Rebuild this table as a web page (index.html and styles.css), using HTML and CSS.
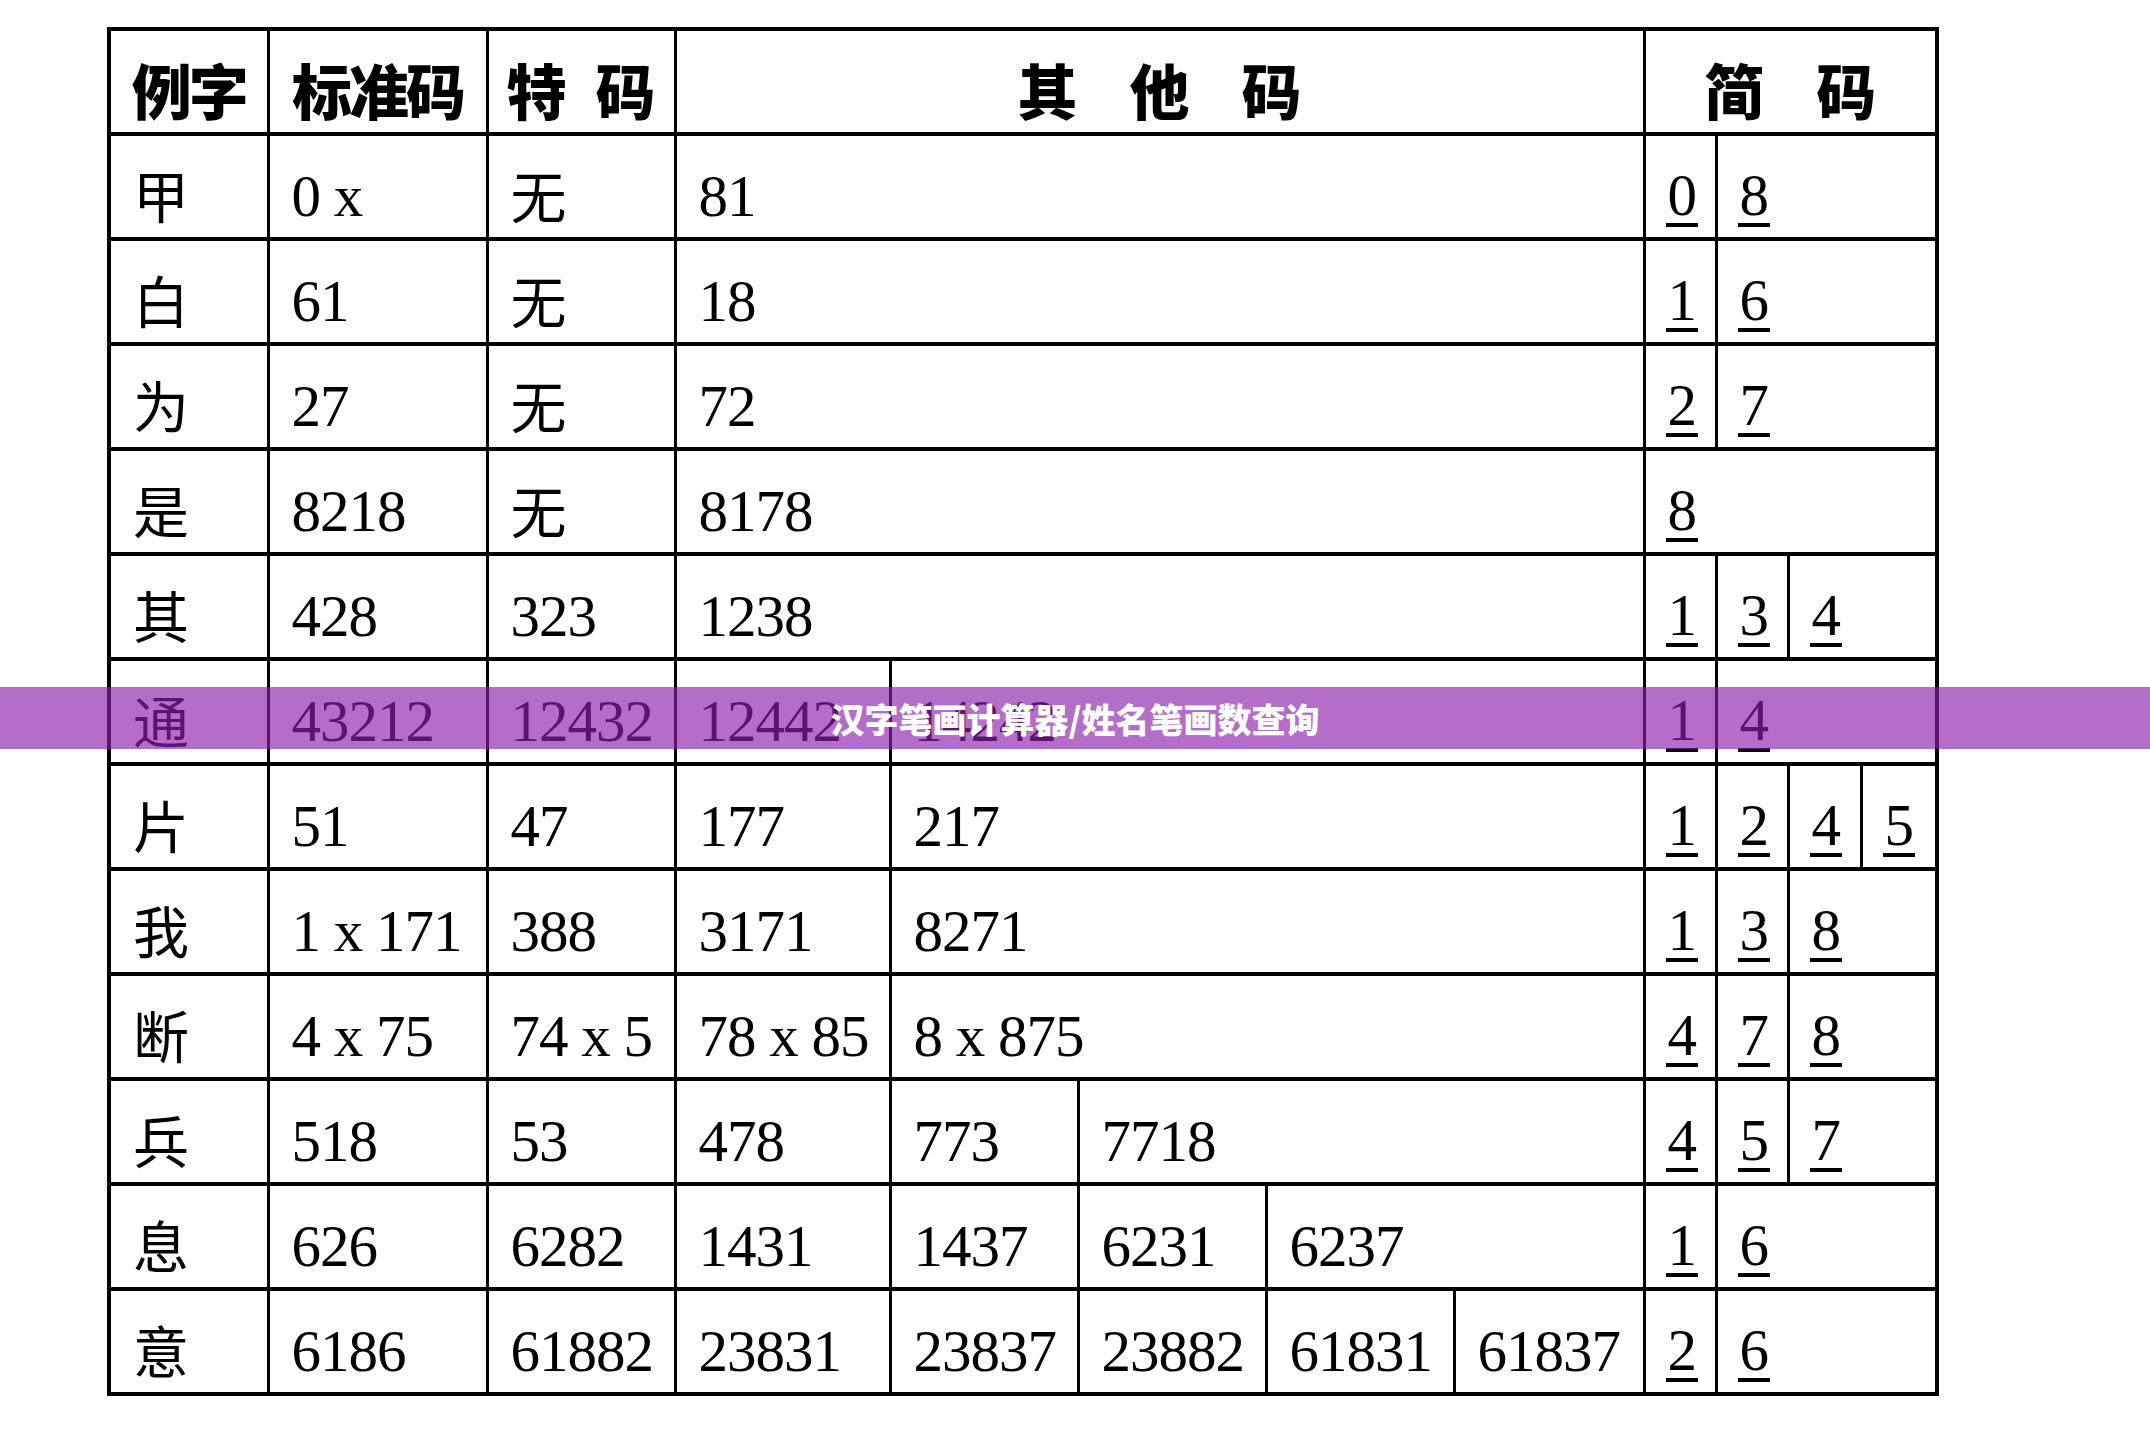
FILE: index.html
```html
<!DOCTYPE html>
<html lang="zh-CN">
<head>
<meta charset="utf-8">
<title>汉字笔画计算器/姓名笔画数查询</title>
<link rel="stylesheet" href="styles.css">
</head>
<body>
<div class="page">
  <table class="codes">
    <colgroup>
      <col class="w159"><col class="w219"><col class="w188"><col class="w215"><col class="w188"><col class="w188"><col class="w188"><col class="w190"><col class="w72"><col class="w72"><col class="w73"><col class="w76">
    </colgroup>
    <tr class="head">
      <th class="h-tight">例字</th>
      <th class="h-tight">标准码</th>
      <th><span class="g-mid">特</span>码</th>
      <th colspan="5"><span class="g-wide">其</span><span class="g-wide">他</span>码</th>
      <th colspan="4"><span class="g-wide">简</span>码</th>
    </tr>
    <tr>
      <td class="zh">甲</td><td>0 x</td><td class="zh">无</td><td colspan="5">81</td>
      <td><span class="u">0</span></td><td colspan="3"><span class="u">8</span></td>
    </tr>
    <tr>
      <td class="zh">白</td><td>61</td><td class="zh">无</td><td colspan="5">18</td>
      <td><span class="u">1</span></td><td colspan="3"><span class="u">6</span></td>
    </tr>
    <tr>
      <td class="zh">为</td><td>27</td><td class="zh">无</td><td colspan="5">72</td>
      <td><span class="u">2</span></td><td colspan="3"><span class="u">7</span></td>
    </tr>
    <tr>
      <td class="zh">是</td><td>8218</td><td class="zh">无</td><td colspan="5">8178</td>
      <td colspan="4"><span class="u">8</span></td>
    </tr>
    <tr>
      <td class="zh">其</td><td>428</td><td>323</td><td colspan="5">1238</td>
      <td><span class="u">1</span></td><td><span class="u">3</span></td><td colspan="2"><span class="u">4</span></td>
    </tr>
    <tr>
      <td class="zh">通</td><td>43212</td><td>12432</td><td>12442</td><td colspan="4">14242</td>
      <td><span class="u">1</span></td><td colspan="3"><span class="u">4</span></td>
    </tr>
    <tr>
      <td class="zh">片</td><td>51</td><td>47</td><td>177</td><td colspan="4">217</td>
      <td><span class="u">1</span></td><td><span class="u">2</span></td><td><span class="u">4</span></td><td><span class="u">5</span></td>
    </tr>
    <tr>
      <td class="zh">我</td><td>1 x 171</td><td>388</td><td>3171</td><td colspan="4">8271</td>
      <td><span class="u">1</span></td><td><span class="u">3</span></td><td colspan="2"><span class="u">8</span></td>
    </tr>
    <tr>
      <td class="zh">断</td><td>4 x 75</td><td>74 x 5</td><td>78 x 85</td><td colspan="4">8 x 875</td>
      <td><span class="u">4</span></td><td><span class="u">7</span></td><td colspan="2"><span class="u">8</span></td>
    </tr>
    <tr>
      <td class="zh">兵</td><td>518</td><td>53</td><td>478</td><td>773</td><td colspan="3">7718</td>
      <td><span class="u">4</span></td><td><span class="u">5</span></td><td colspan="2"><span class="u">7</span></td>
    </tr>
    <tr>
      <td class="zh">息</td><td>626</td><td>6282</td><td>1431</td><td>1437</td><td>6231</td><td colspan="2">6237</td>
      <td><span class="u">1</span></td><td colspan="3"><span class="u">6</span></td>
    </tr>
    <tr>
      <td class="zh">意</td><td>6186</td><td>61882</td><td>23831</td><td>23837</td><td>23882</td><td>61831</td><td>61837</td>
      <td><span class="u">2</span></td><td colspan="3"><span class="u">6</span></td>
    </tr>
  </table>
  <div class="banner">汉字笔画计算器/姓名笔画数查询</div>
</div>
</body>
</html>
```

FILE: styles.css
```css
html, body {
  margin: 0;
  padding: 0;
  background: #ffffff;
}

.page {
  position: relative;
  width: 2150px;
  height: 1436px;
  padding-top: 27px;
  box-sizing: border-box;
}

.codes {
  margin-left: 107px;
  width: 1828px;
  table-layout: fixed;
  border-collapse: collapse;
  border: 4px solid #000;
  color: #000;
  font-family: "Liberation Serif", "Times New Roman", serif;
  font-size: 59px;
  letter-spacing: -1px;
}

.w159 { width: 159px; }
.w219 { width: 219px; }
.w188 { width: 188px; }
.w215 { width: 215px; }
.w190 { width: 190px; }
.w72 { width: 72px; }
.w73 { width: 73px; }
.w76 { width: 76px; }

.codes tr {
  height: 105px;
}

.codes th,
.codes td {
  border-style: solid;
  border-color: #000;
  border-width: 4px 3px;
  padding: 20px 0 0 22px;
  vertical-align: middle;
  white-space: nowrap;
  overflow: visible;
  line-height: 1;
}

.codes th {
  padding: 14px 0 0 0;
  text-align: center;
  font-family: "Noto Sans CJK SC", "Noto Sans CJK JP", sans-serif;
  font-weight: 900;
  font-size: 60px;
  letter-spacing: 0;
}

.h-tight { letter-spacing: -3px !important; }
.g-mid { margin-right: 29px; }
.g-wide { margin-right: 52px; }

.codes td.zh {
  padding-top: 14px;
  font-family: "Noto Sans CJK SC", "Noto Sans CJK JP", sans-serif;
  font-size: 56px;
  font-weight: 400;
  letter-spacing: 0;
}

.u {
  display: inline-block;
  line-height: 0.95;
  border-bottom: 4px solid #000;
  padding: 0 2px;
  margin-left: -2px;
}

.banner {
  position: absolute;
  left: 0;
  right: 0;
  top: 687px;
  height: 62px;
  background: rgba(140, 30, 170, 0.65);
  color: #ffffff;
  display: flex;
  align-items: center;
  justify-content: center;
  font-family: "Noto Sans CJK SC", "Noto Sans CJK JP", sans-serif;
  font-weight: 900;
  font-size: 34px;
  letter-spacing: 0;
}
```
